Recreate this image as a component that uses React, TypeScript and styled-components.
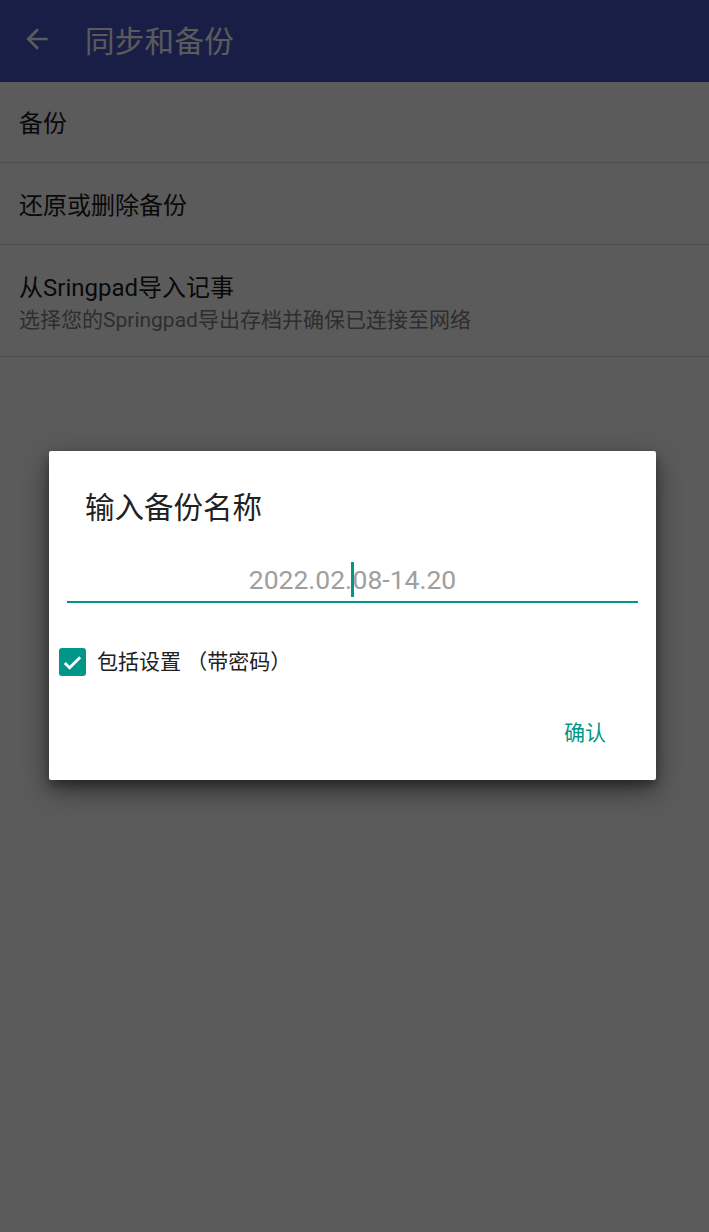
import React from "react";
import styled, { createGlobalStyle } from "styled-components";

const Global = createGlobalStyle`
  html, body { margin: 0; padding: 0; background: #ffffff; }
  body { font-family: Roboto, "Noto Sans CJK SC", sans-serif; }
  * { box-sizing: border-box; }
`;

const Screen = styled.div`
  position: relative;
  width: 709px;
  height: 1232px;
  background: #ffffff;
  overflow: hidden;
`;

const Toolbar = styled.header`
  height: 82px;
  background: #4856c8;
  display: flex;
  align-items: center;
  padding: 0 0 4px 20px;
  gap: 31px;
  color: #ffffff;
`;

const Title = styled.h1`
  margin: 0;
  font-size: 29.5px;
  font-weight: 400;
  color: #ffffff;
  letter-spacing: 0.3px;
`;

const BackBtn = styled.div`
  width: 34px;
  height: 34px;
  display: flex;
  align-items: center;
  justify-content: center;
`;

const List = styled.div`
  display: flex;
  flex-direction: column;
`;

const Row = styled.div<{ $h: number }>`
  height: ${(p) => p.$h}px;
  border-bottom: 1px solid #dedede;
  padding: 4px 19px 0 19px;
  display: flex;
  flex-direction: column;
  justify-content: center;
  gap: 2px;
`;

const RowTitle = styled.div`
  font-size: 24px;
  color: #1a1a1a;
  line-height: 32px;
`;

const RowSub = styled.div`
  font-size: 21px;
  color: #808080;
  line-height: 28px;
`;

const Scrim = styled.div`
  position: absolute;
  inset: 0;
  background: rgba(0, 0, 0, 0.643);
  display: flex;
  justify-content: flex-start;
  align-items: flex-start;
  padding: 451px 0 0 49px;
`;

const Dialog = styled.div`
  width: 607px;
  height: 329px;
  background: #ffffff;
  border-radius: 2px;
  box-shadow: 0 10px 28px rgba(0, 0, 0, 0.45), 0 6px 10px rgba(0, 0, 0, 0.3);
  display: flex;
  flex-direction: column;
  padding-top: 34px;
`;

const DialogTitle = styled.div`
  font-size: 29.5px;
  color: #212121;
  padding-left: 36px;
  line-height: 46px;
`;

const Field = styled.div`
  margin: 20px 18px 0 18px;
  height: 52px;
  border-bottom: 2.5px solid #009688;
  display: flex;
  justify-content: center;
  align-items: center;
  padding-top: 7px;
`;

const FieldText = styled.div`
  font-size: 26.5px;
  color: #9e9e9e;
  font-family: Roboto, sans-serif;
  display: flex;
  align-items: center;
`;

const Caret = styled.span`
  display: inline-block;
  width: 2.5px;
  height: 35px;
  background: #009688;
  margin: 0 -1px;
`;

const CheckRow = styled.label`
  display: flex;
  align-items: center;
  gap: 11px;
  margin: 44px 0 0 10px;
  font-size: 21px;
  line-height: 30px;
  color: #212121;
`;

const CheckBox = styled.span`
  width: 27px;
  height: 28px;
  border-radius: 3px;
  background: #009688;
  display: flex;
  align-items: center;
  justify-content: center;
`;

const Actions = styled.div`
  display: flex;
  justify-content: flex-end;
  margin-top: 41px;
  padding-right: 50px;
`;

const TextButton = styled.button`
  border: none;
  background: none;
  padding: 0;
  font-family: Roboto, "Noto Sans CJK SC", sans-serif;
  font-size: 21px;
  color: #009688;
  line-height: 30px;
`;

export default function App() {
  return (
    <>
      <Global />
      <Screen>
        <Toolbar>
          <BackBtn>
            <svg width="32" height="32" viewBox="0 0 24 24">
              <path
                d="M20 11H7.83l5.59-5.59L12 4l-8 8 8 8 1.41-1.41L7.83 13H20v-2z"
                fill="#ffffff"
              />
            </svg>
          </BackBtn>
          <Title>同步和备份</Title>
        </Toolbar>
        <List>
          <Row $h={81}>
            <RowTitle>备份</RowTitle>
          </Row>
          <Row $h={82}>
            <RowTitle>还原或删除备份</RowTitle>
          </Row>
          <Row $h={112}>
            <RowTitle>从Sringpad导入记事</RowTitle>
            <RowSub>选择您的Springpad导出存档并确保已连接至网络</RowSub>
          </Row>
        </List>
        <Scrim>
          <Dialog>
            <DialogTitle>输入备份名称</DialogTitle>
            <Field>
              <FieldText>
                2022.02.<Caret />08-14.20
              </FieldText>
            </Field>
            <CheckRow>
              <CheckBox>
                <svg width="23" height="23" viewBox="0 0 24 24">
                  <path
                    d="M4 12.5l5 5L20 6.5"
                    fill="none"
                    stroke="#ffffff"
                    strokeWidth="3"
                  />
                </svg>
              </CheckBox>
              包括设置 （带密码）
            </CheckRow>
            <Actions>
              <TextButton>确认</TextButton>
            </Actions>
          </Dialog>
        </Scrim>
      </Screen>
    </>
  );
}
